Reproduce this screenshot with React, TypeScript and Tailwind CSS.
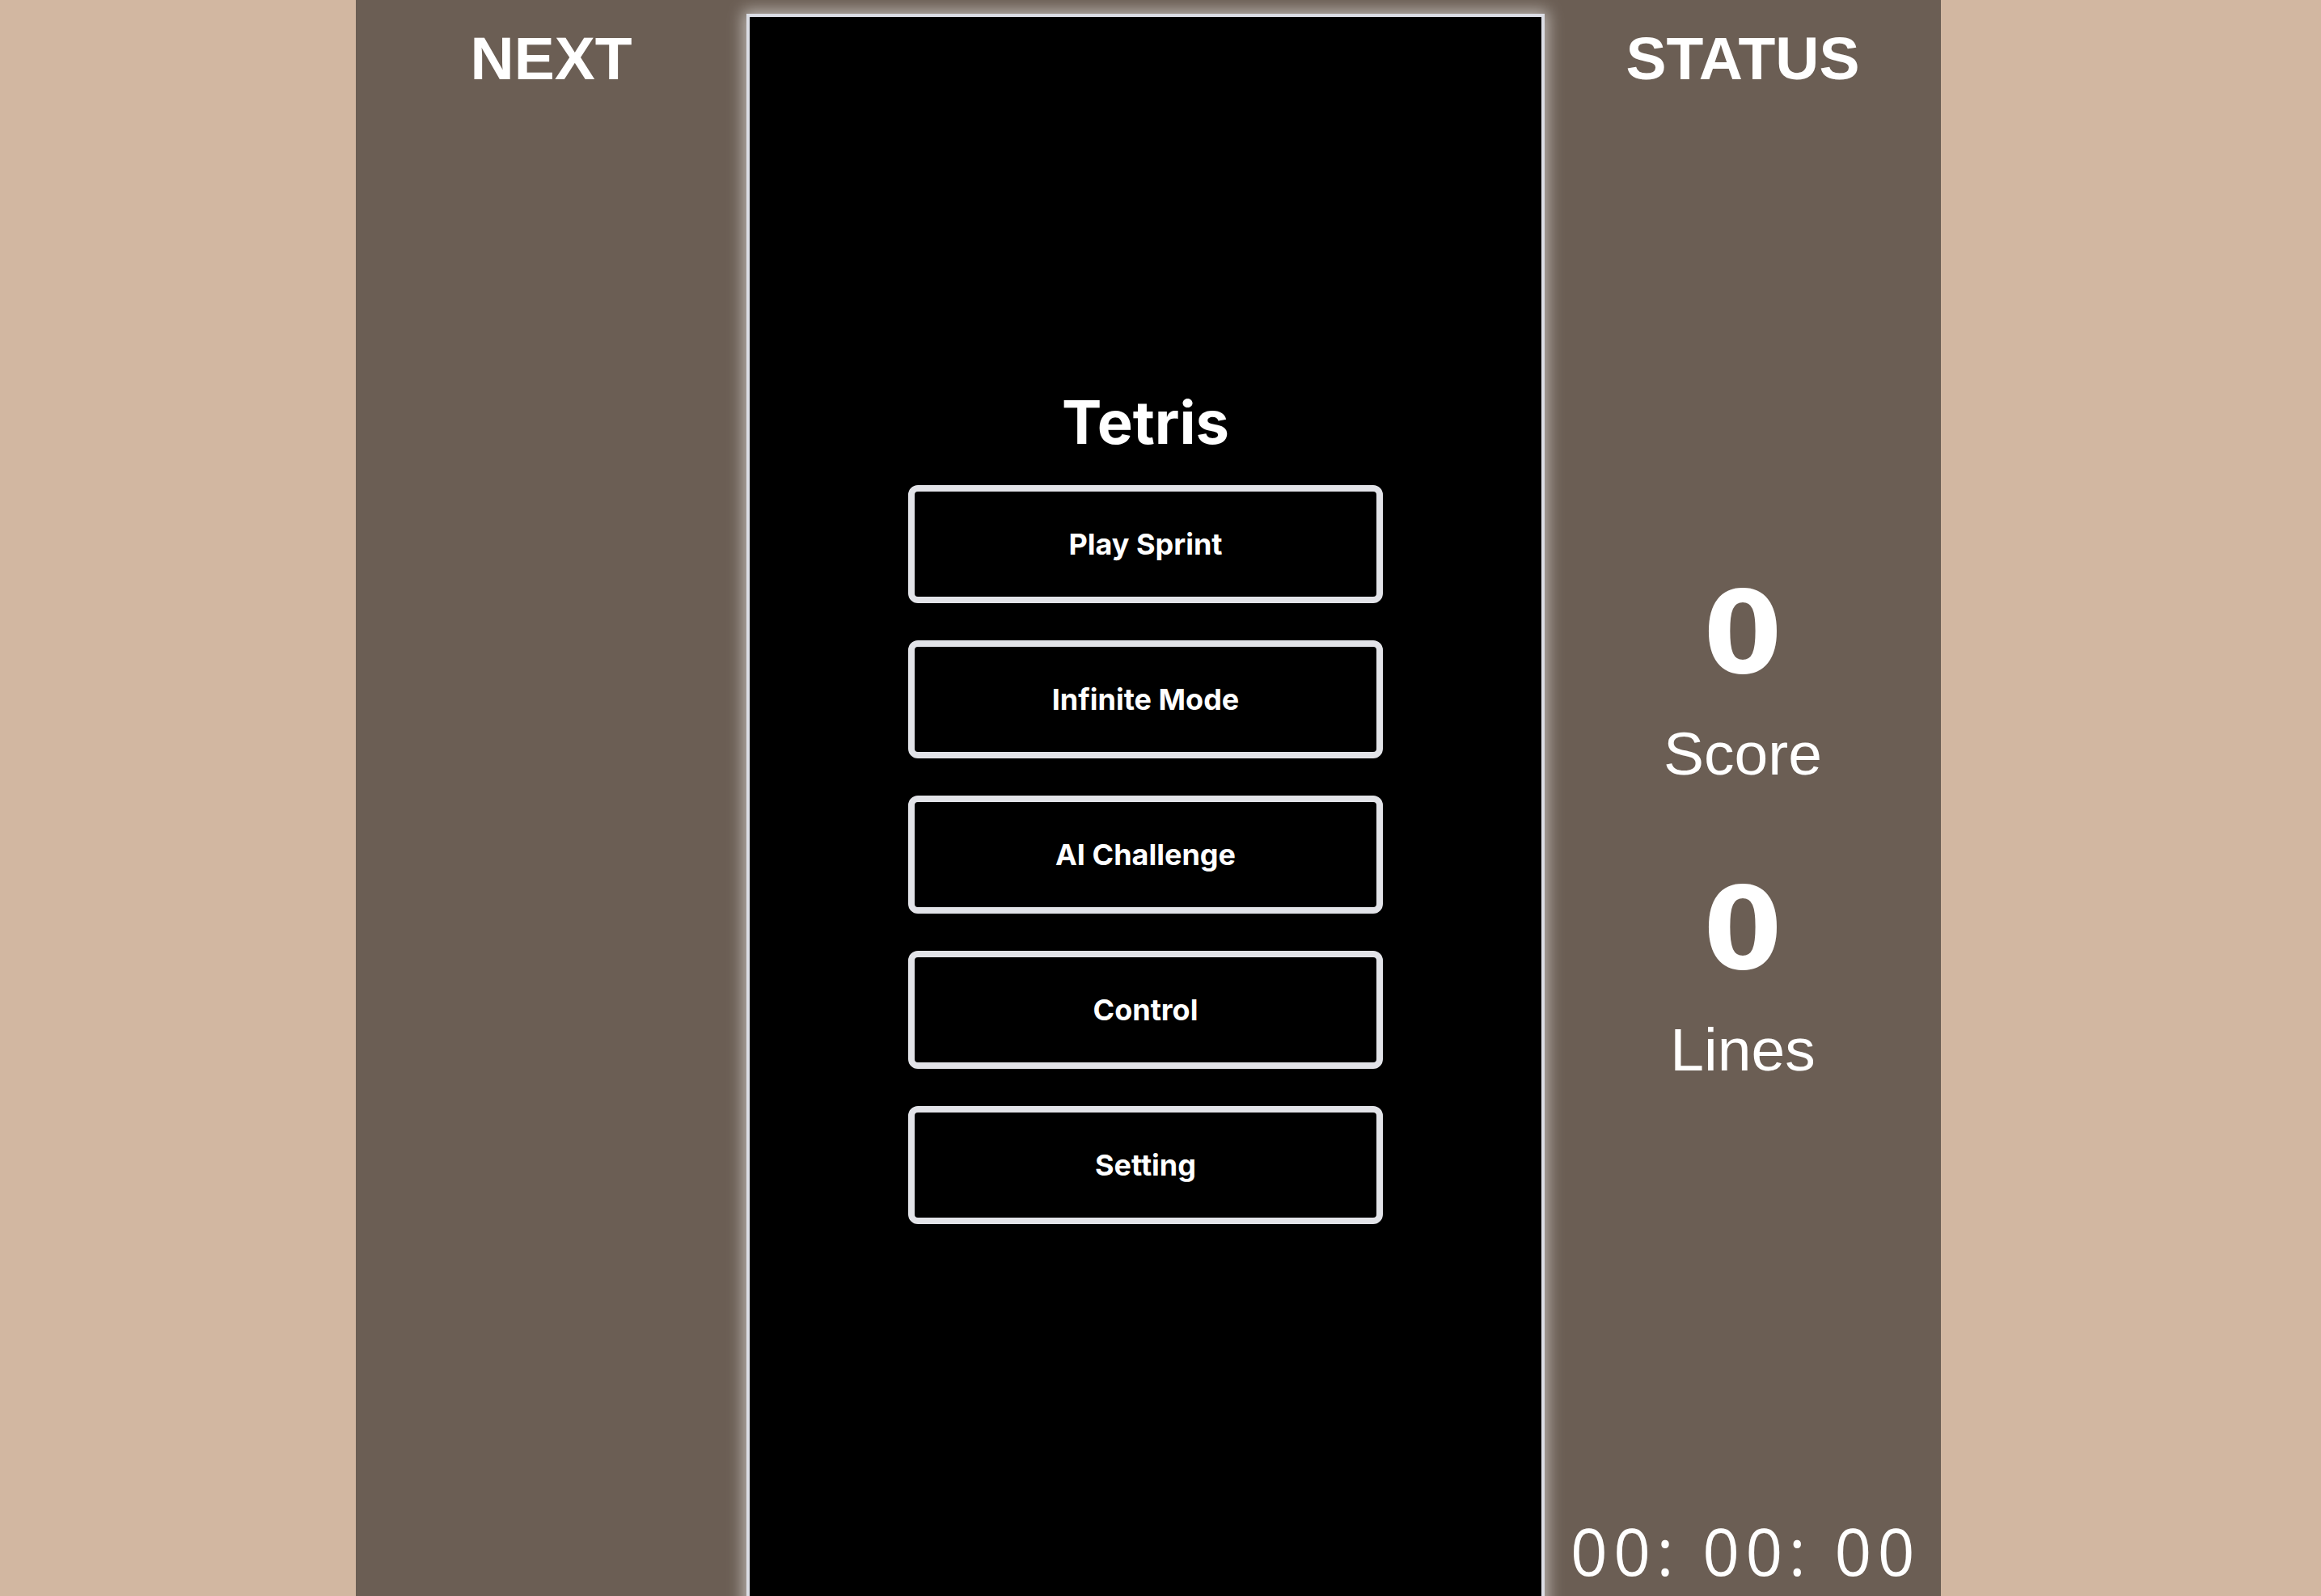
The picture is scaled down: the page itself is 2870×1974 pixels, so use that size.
import React from 'react';

const MENU_ITEMS = ['Play Sprint', 'Infinite Mode', 'AI Challenge', 'Control', 'Setting'];

const sans = "font-['Liberation_Sans',Arial,sans-serif]";

const MenuButton: React.FC<{ label: string }> = ({ label }) => (
  <button
    type="button"
    className="w-[587px] h-[146px] border-[8px] border-[#e2e3e8] rounded-[12px] bg-black text-white text-[36px] leading-none font-bold flex items-center justify-center"
  >
    {label}
  </button>
);

const StatBlock: React.FC<{ value: number; label: string; className?: string }> = ({ value, label, className }) => (
  <div className={`flex flex-col items-center ${className ?? ''}`}>
    <div className="font-['DejaVu_Sans',sans-serif] font-bold text-[140px] leading-none">{value}</div>
    <div className={`${sans} text-[75px] leading-none mt-[41px]`}>{label}</div>
  </div>
);

export default function App() {
  return (
    <div className="w-full h-screen overflow-hidden bg-[#d2b7a1] pl-[440px]">
      <div className="w-[1960px] h-full bg-[#6b5e54] flex text-white">
        {/* Next piece panel */}
        <div className="w-[483px] h-full shrink-0 flex flex-col items-center pt-[35px]">
          <h2 className={`${sans} font-bold text-[75px] leading-none`}>NEXT</h2>
        </div>

        {/* Board */}
        <div className="w-[987px] h-[2000px] shrink-0 mt-[17px] bg-black border-[4px] border-[#dcdee6] shadow-[0_0_18px_4px_rgba(255,255,255,0.55)] font-['Inter',sans-serif] flex flex-col items-center pt-[464px]">
          <h1 className="text-[74px] leading-none font-bold text-white">Tetris</h1>
          <div className="flex flex-col gap-[46px] mt-[41px]">
            {MENU_ITEMS.map(item => (
              <MenuButton key={item} label={item} />
            ))}
          </div>
        </div>

        {/* Status panel */}
        <div className="w-[490px] h-full shrink-0 flex flex-col items-center pt-[35px]">
          <h2 className={`${sans} font-bold text-[75px] leading-none`}>STATUS</h2>
          <StatBlock value={0} label="Score" className="mt-[604px]" />
          <StatBlock value={0} label="Lines" className="mt-[110px]" />
          <div className="mt-auto mb-[16px] pl-[7px] font-['Open_Sans',sans-serif] text-[80px] leading-none tracking-[7.5px] whitespace-pre">
            00: 00: 00
          </div>
        </div>
      </div>
    </div>
  );
}
